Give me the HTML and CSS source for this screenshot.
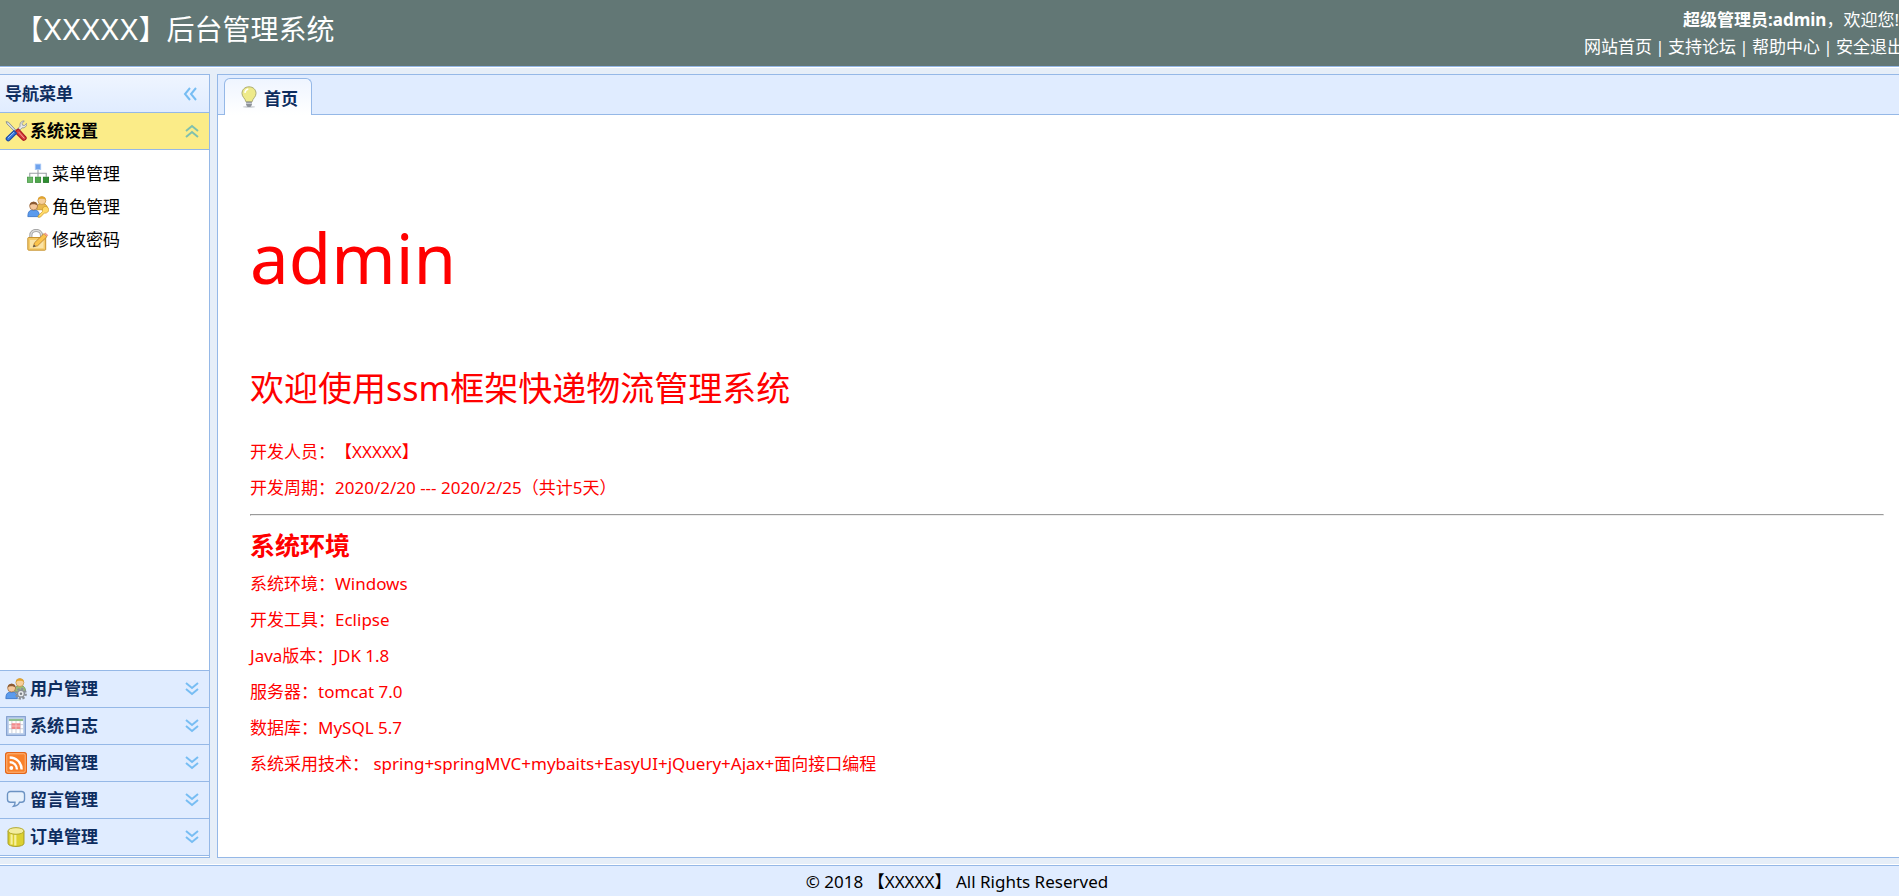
FILE: index.html
```
<!DOCTYPE html>
<html lang="zh-CN">
<head>
  <meta charset="UTF-8">
  <meta name="viewport" content="width=device-width, initial-scale=1.0">
  <title>后台管理系统</title>
  <link rel="stylesheet" href="styles.css">
</head>
<body>
  <!-- shared arrows -->
  <svg width="0" height="0" class="defs" aria-hidden="true">
    <symbol id="arrow-down" viewBox="0 0 14 14"><path d="M1 1l6 5 6-5M1 7l6 5 6-5"/></symbol>
    <symbol id="arrow-up" viewBox="0 0 14 14"><path d="M1 7l6-5 6 5M1 13l6-5 6 5"/></symbol>
    <symbol id="arrow-left" viewBox="0 0 14 14"><path d="M7 1L2 7l5 6M13 1L8 7l5 6"/></symbol>
  </svg>

  <header class="header">
    <h1 class="logo">【XXXXX】后台管理系统</h1>
    <div class="user">
      <div class="welcome"><strong>超级管理员:admin</strong>，欢迎您!</div>
      <nav class="links">
        <a href="#">网站首页</a><span>|</span><a href="#">支持论坛</a><span>|</span><a href="#">帮助中心</a><span>|</span><a href="#">安全退出</a>
      </nav>
    </div>
  </header>

  <div class="layout">
    <aside class="sidebar">
      <div class="panel-title">
        <span>导航菜单</span>
        <button class="collapse" aria-label="收起"><svg class="arrow"><use href="#arrow-left"/></svg></button>
      </div>
      <button class="acc acc-open">
        <svg class="icon" viewBox="0 0 16 16">
          <path d="M.8 1.2l1.6.3 6 6.4-1 .9-6-6z" fill="#d8dde2" stroke="#7d858c" stroke-width=".6"/>
          <path d="M8 7.500l3-3c-.5-2 .8-4 3-3.800l-1.600 1.800.4 1.300 1.400.2 1.500-1.600c.4 2-1.300 3.600-3.300 3.300L9.200 9z" fill="#e6e8ea" stroke="#8a9096" stroke-width=".6"/>
          <path d="M8.300 7.400l1.500-.9 5.400 5.900c.8 1.300-1.100 3-2.400 2L7.400 9z" fill="#dc3f3f" stroke="#a91c22" stroke-width=".9"/>
          <path d="M10 8.800l4 4.500" stroke="#f6a5a0" stroke-width=".7"/>
          <path d="M6.600 7.800l1.800 1.800-5.200 5.200c-1.200 1-3-.7-2-2z" fill="#3a7be0" stroke="#1b4ca6" stroke-width=".9"/>
          <path d="M2.200 13l4.400-4.200" stroke="#9cc4ff" stroke-width=".7"/>
        </svg>
        <span>系统设置</span>
        <svg class="arrow"><use href="#arrow-up"/></svg>
      </button>
      <ul class="menu">
        <li><a href="#">
          <svg class="icon" viewBox="0 0 16 16">
            <path d="M8 5v5M2 10V7.500h12V10" fill="none" stroke="#9a9fa5" stroke-width=".8"/>
            <rect x="6" y=".8" width="4" height="4" fill="#6fa3ee" stroke="#a9c9f5" stroke-width=".6"/>
            <rect x=".3" y="10.300" width="3.800" height="3.800" fill="#6cb868" stroke="#4a9a48" stroke-width=".6"/>
            <rect x="6.100" y="10.300" width="3.800" height="3.800" fill="#4fa84c" stroke="#378a36" stroke-width=".6"/>
            <rect x="11.900" y="10.300" width="3.800" height="3.800" fill="#2f8f32" stroke="#1e7424" stroke-width=".6"/>
          </svg>
          <span>菜单管理</span></a></li>
        <li><a href="#">
          <svg class="icon" viewBox="0 0 16 16">
            <path d="M7 10c0-4 2-4.500 4-4.500s4 .8 4 4.500z" fill="#e8b84e" stroke="#b98a28" stroke-width=".5"/>
            <circle cx="10.800" cy="3.300" r="2.900" fill="#f6cf9a" stroke="#c08c3c" stroke-width=".5"/>
            <path d="M7.900 3C8-.6 13.700-.6 13.700 3c-1-1.200-4.500-1.400-5.800 0z" fill="#e2a52c"/>
            <path d="M.6 15c0-4 1.500-4.800 4.200-4.800S9 11 9 15z" fill="#5b9bed" stroke="#2e69bd" stroke-width=".5"/>
            <circle cx="4.800" cy="7.300" r="2.900" fill="#f5c79b" stroke="#9b6a3e" stroke-width=".5"/>
            <path d="M1.900 7C2 3.300 7.700 3.300 7.700 7c-1-1.300-4.500-1.500-5.800 0z" fill="#8b5a33"/>
            <path d="M8 14.500l3.300-3.300c-.8-2.800 1.700-4.600 3.700-3 1.800 1.900.2 4.700-2.400 4.200L9.700 15.400H8z" fill="#ffd968" stroke="#c99420" stroke-width=".5"/>
          </svg>
          <span>角色管理</span></a></li>
        <li><a href="#">
          <svg class="icon" viewBox="0 0 16 16">
            <path d="M2.800 7V4.500c0-4.600 7.700-4.600 7.700 0V7" fill="none" stroke="#9b9b9b" stroke-width="2.200"/>
            <path d="M2.800 7V4.500c0-4.600 7.700-4.600 7.700 0V7" fill="none" stroke="#dcdcdc" stroke-width="1"/>
            <rect x=".6" y="6.200" width="13" height="9.200" rx=".6" fill="#f5cc6c" stroke="#c58f2a" stroke-width=".7"/>
            <path d="M2.200 8h9.800v6H2.200z" fill="#fae3a6"/>
            <path d="M4.500 13l1-3 6.800-6.600 2.300 2.100-6.900 6.700z" fill="#fbc34b" stroke="#b9802a" stroke-width=".6"/>
            <path d="M12.300 3.400l1-.9 2.200 2-.9 1z" fill="#ef9d8d"/>
            <path d="M4.300 13.200l.8-2 1.300 1.300z" fill="#555"/>
          </svg>
          <span>修改密码</span></a></li>
      </ul>
      <button class="acc">
        <svg class="icon" viewBox="0 0 16 16">
          <path d="M7 10c0-4 2-4.500 4-4.500s4 .8 4 4.500z" fill="#9cbc78" stroke="#6e9050" stroke-width=".5"/>
          <circle cx="10.800" cy="3.300" r="2.900" fill="#f6cf9a" stroke="#c08c3c" stroke-width=".5"/>
          <path d="M7.900 3C8-.6 13.700-.6 13.700 3c-1-1.200-4.500-1.400-5.800 0z" fill="#e2a52c"/>
          <path d="M.6 15c0-4 1.500-4.800 4.200-4.800S9 11 9 15z" fill="#5b9bed" stroke="#2e69bd" stroke-width=".5"/>
          <circle cx="4.800" cy="7.300" r="2.900" fill="#f5c79b" stroke="#9b6a3e" stroke-width=".5"/>
          <path d="M1.900 7C2 3.300 7.700 3.300 7.700 7c-1-1.300-4.500-1.500-5.800 0z" fill="#8b5a33"/>
          <circle cx="11.600" cy="11.400" r="3.500" fill="none" stroke="#8b9096" stroke-width="1.700" stroke-dasharray="1.600 1.100"/>
          <circle cx="11.600" cy="11.400" r="2.500" fill="#e9ebed" stroke="#8b9096" stroke-width="1.100"/>
          <circle cx="11.600" cy="11.400" r=".9" fill="#7b8086"/>
        </svg>
        <span>用户管理</span>
        <svg class="arrow"><use href="#arrow-down"/></svg>
      </button>
      <button class="acc">
        <svg class="icon" viewBox="0 0 16 16">
          <rect x="1.200" y="1.200" width="13.600" height="13.600" fill="#b9cdec" stroke="#7f9dcd" stroke-width=".8"/>
          <rect x="2.800" y="2.800" width="10.400" height="10.400" fill="#fff"/>
          <rect x="2.800" y="2.800" width="10.400" height="1.600" fill="#8fc08e"/>
          <path d="M2.800 7h10.400M2.800 10h10.400M5 4.400v8.800M8 4.400v8.800M11 4.400v8.800" stroke="#b7bcc8" stroke-width=".5"/>
          <path d="M4.800 6h6.300v4.200H4.800z" fill="#f08a8a"/>
          <path d="M4.800 8h6.300M8 6v4.200" stroke="#f9c9c9" stroke-width=".6"/>
        </svg>
        <span>系统日志</span>
        <svg class="arrow"><use href="#arrow-down"/></svg>
      </button>
      <button class="acc">
        <svg class="icon" viewBox="0 0 16 16">
          <rect x=".4" y=".4" width="15.200" height="15.200" rx="1.600" fill="#f9812a" stroke="#e2661a" stroke-width=".8"/>
          <rect x="1.300" y="1.300" width="13.400" height="13.400" rx="1" fill="none" stroke="#fdb780" stroke-width=".7"/>
          <circle cx="4.600" cy="11.600" r="1.400" fill="#fff"/>
          <path d="M3.400 7.400c3 0 5.300 2.300 5.300 5.400M3.400 4c5 0 8.700 3.800 8.700 8.800" fill="none" stroke="#fff" stroke-width="1.700"/>
        </svg>
        <span>新闻管理</span>
        <svg class="arrow"><use href="#arrow-down"/></svg>
      </button>
      <button class="acc">
        <svg class="icon" viewBox="0 0 16 16">
          <path d="M4 1.800h8c1.400 0 2.200 1 2.200 2.200v3.400c0 1.300-.8 2.200-2.200 2.200h-1.500c-.5 1.600-2 2.700-4.300 3 .9-.9 1.200-1.800 1.100-3H4c-1.400 0-2.200-.9-2.200-2.200V4c0-1.200.8-2.200 2.200-2.200z" fill="#e7f1fc" stroke="#6c93c3"/>
        </svg>
        <span>留言管理</span>
        <svg class="arrow"><use href="#arrow-down"/></svg>
      </button>
      <button class="acc">
        <svg class="icon" viewBox="0 0 16 16">
          <path d="M2.200 3.600v9c0 3 11.600 3 11.600 0v-9z" fill="#dcd030" stroke="#a39a1c" stroke-width=".7"/>
          <path d="M4.800 6v7.500M7.500 6.300v7.800" stroke="#f6f0a0" stroke-width="1.600"/>
          <ellipse cx="8" cy="3.600" rx="5.800" ry="2.400" fill="#f3eda0" stroke="#b0a728" stroke-width=".7"/>
        </svg>
        <span>订单管理</span>
        <svg class="arrow"><use href="#arrow-down"/></svg>
      </button>
    </aside>

    <main class="main">
      <div class="tabs">
        <button class="tab">
          <svg class="icon" viewBox="0 0 16 16">
            <ellipse cx="8" cy="15.200" rx="4.500" ry=".7" fill="#c9cdd2"/>
            <path d="M8 .6C4.800.6 2.900 2.800 2.900 5.400c0 2.600 2.400 3.600 2.800 6h4.600c.4-2.400 2.800-3.400 2.800-6C13.100 2.800 11.200.6 8 .6z" fill="#eeea8a" stroke="#a9a970" stroke-width=".7"/>
            <path d="M5 5c.2-1.500 1-2.500 2.500-2.800" fill="none" stroke="#fff" stroke-width="1.100"/>
            <path d="M5.900 11.500h4.200v2.300L9 15.200H7l-1.100-1.400z" fill="#8d9299"/>
            <path d="M5.900 12.600h4.200" stroke="#d9dce0" stroke-width=".7"/>
          </svg>
          <span>首页</span>
        </button>
      </div>
      <div class="content">
        <p class="name">admin</p>
        <p class="hello">欢迎使用ssm框架快递物流管理系统</p>
        <p>开发人员：【XXXXX】</p>
        <p>开发周期：2020/2/20 --- 2020/2/25（共计5天）</p>
        <hr>
        <h2>系统环境</h2>
        <p>系统环境：Windows</p>
        <p>开发工具：Eclipse</p>
        <p>Java版本：JDK 1.8</p>
        <p>服务器：tomcat 7.0</p>
        <p>数据库：MySQL 5.7</p>
        <p>系统采用技术： spring+springMVC+mybaits+EasyUI+jQuery+Ajax+面向接口编程</p>
      </div>
    </main>
  </div>

  <footer class="footer">© 2018 【XXXXX】 All Rights Reserved</footer>
</body>
</html>
```
FILE: styles.css
```
* {
  box-sizing: border-box;
}
body {
  margin: 0;
  height: 100vh;
  display: flex;
  flex-direction: column;
  overflow: hidden;
  background: #e6eef8;
  font-family: "Noto Sans", "Noto Sans CJK SC", sans-serif;
  font-size: 17px;
  text-spacing-trim: space-all;
}
h1, h2, p, ul {
  margin: 0;
  padding: 0;
}
a {
  color: inherit;
  text-decoration: none;
}
button {
  border: 0;
  padding: 0;
  font-family: inherit;
  cursor: pointer;
}
.defs {
  display: none;
}
.icon {
  width: 22px;
  height: 22px;
  flex: none;
}
.arrow {
  width: 14px;
  height: 14px;
  fill: none;
  stroke: #77bdf3;
  stroke-width: 2;
}

/* header */
.header {
  display: flex;
  justify-content: space-between;
  height: 67px;
  flex: none;
  background: #627775;
  border-bottom: 1px solid #95b8e7;
  color: #fff;
}
.logo {
  padding-left: 15px;
  font-family: Inter, "Noto Sans CJK SC", sans-serif;
  font-size: 28px;
  font-weight: 400;
  line-height: 60px;
}
.user {
  margin-right: -5px;
  padding-top: 6px;
  text-align: right;
  line-height: 27px;
  white-space: nowrap;
}
.welcome {
  padding-right: 5px;
}
.links {
  display: flex;
}
.links span {
  width: 16px;
  text-align: center;
}

/* layout */
.layout {
  flex: 1;
  min-height: 0;
  display: flex;
  gap: 7px;
  padding: 6px 0;
  border-top: 1px solid #fff;
  border-bottom: 1px solid #fff;
}
.sidebar {
  width: 210px;
  flex: none;
  display: flex;
  flex-direction: column;
  padding-bottom: 1px;
  background: #fff;
  border: 1px solid #95b8e7;
  border-left: 0;
  color: #0e2d5f;
}
.sidebar span {
  padding-bottom: 3px;
}
.panel-title {
  display: flex;
  align-items: center;
  justify-content: space-between;
  height: 38px;
  padding: 0 12px 0 5px;
  border-bottom: 1px solid #95b8e7;
  background: linear-gradient(#eff5ff, #e0ecff);
  font-weight: 700;
}
.collapse {
  display: flex;
  background: none;
}
.acc {
  display: flex;
  align-items: center;
  gap: 3px;
  height: 37px;
  padding: 0 10px 0 5px;
  border-bottom: 1px solid #95b8e7;
  background: #e0ecff;
  color: inherit;
  font-size: 17px;
  font-weight: 700;
}
.acc .arrow {
  margin-left: auto;
}
.acc-open {
  background: #fbec88;
  color: #000;
}
.acc-open .arrow {
  stroke: #7fc0ae;
}
.menu {
  flex: 1;
  padding: 7px 0 0 27px;
  border-bottom: 1px solid #95b8e7;
  color: #000;
  list-style: none;
}
.menu a {
  display: flex;
  align-items: center;
  gap: 3px;
  height: 33px;
}

/* main */
.main {
  flex: 1;
  min-width: 0;
  display: flex;
  flex-direction: column;
  background: #fff;
  border: 1px solid #95b8e7;
  border-right: 0;
}
.tabs {
  height: 40px;
  flex: none;
  padding: 3px 6px 0;
  background: #e0ecff;
  border-bottom: 1px solid #95b8e7;
}
.tab {
  display: flex;
  align-items: center;
  gap: 4px;
  height: 37px;
  padding: 0 13px;
  border: 1px solid #95b8e7;
  border-bottom: 0;
  border-radius: 6px 6px 0 0;
  background: linear-gradient(#eff5ff, #fff);
  color: #0e2d5f;
  font-size: 17px;
  font-weight: 700;
}
.content {
  flex: 1;
  overflow: hidden;
  padding: 92px 15px 0 32px;
  color: #f00;
  line-height: 36px;
}
.content .name {
  font-size: 69px;
  line-height: 100px;
}
.content .hello {
  padding: 56px 0 21px;
  font-size: 34px;
  line-height: 50px;
}
.content hr {
  margin: 8px 0;
}
.content h2 {
  font-size: 25px;
  line-height: 42px;
}

/* footer */
.footer {
  height: 31px;
  flex: none;
  padding-left: 15px;
  border-top: 1px solid #95b8e7;
  background: #e0ecff;
  text-align: center;
  line-height: 32px;
}
```
